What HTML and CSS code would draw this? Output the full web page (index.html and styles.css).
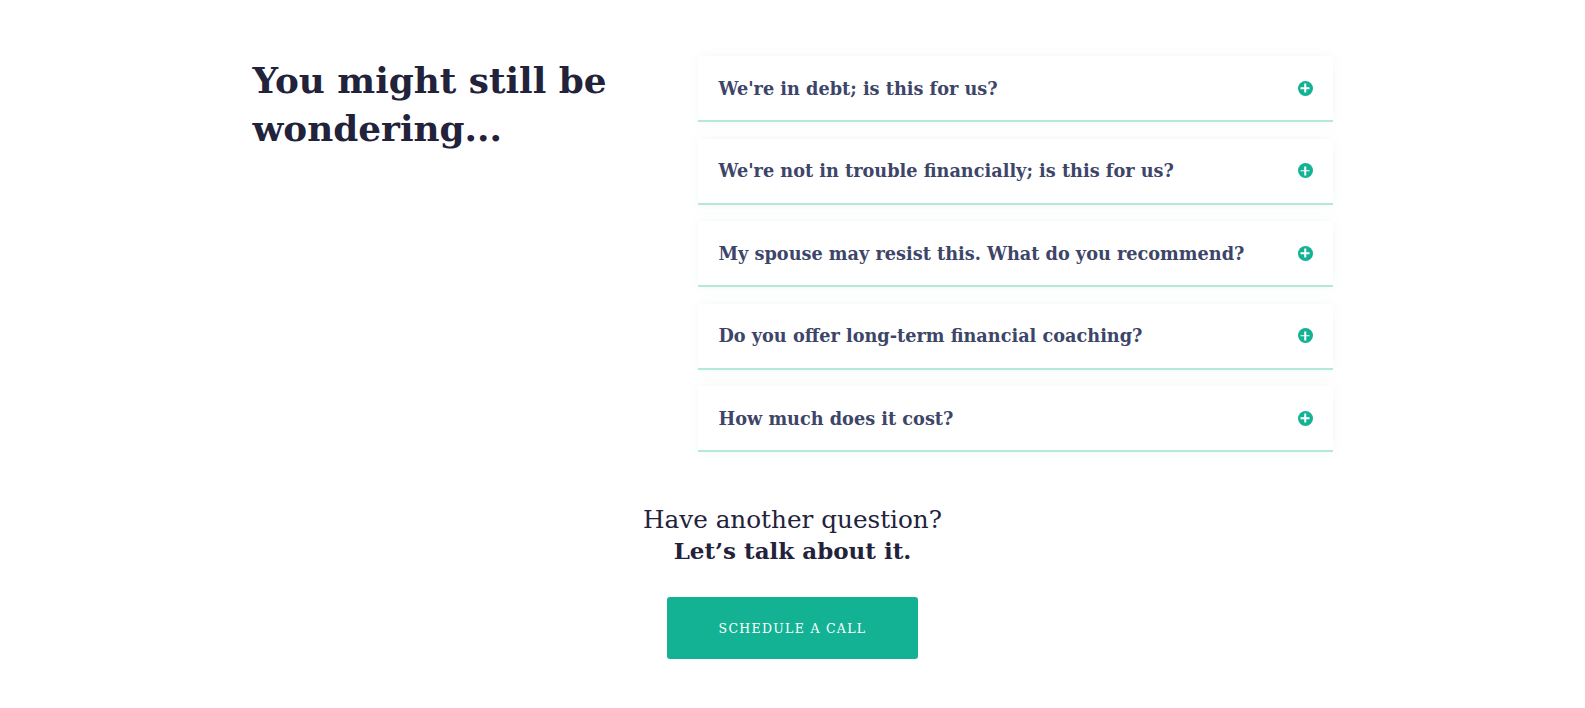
FILE: index.html
```html
<!DOCTYPE html>
<html lang="en">
<head>
<meta charset="utf-8">
<title>FAQ</title>
<link rel="stylesheet" href="styles.css">
</head>
<body>
<section class="faq-section">
  <div class="faq-grid">
    <h2 class="faq-title">You might still be wondering...</h2>
    <div class="faq-list">
      <div class="faq-item"><span class="faq-q">We're in debt; is this for us?</span><span class="faq-icon"></span></div>
      <div class="faq-item"><span class="faq-q">We're not in trouble financially; is this for us?</span><span class="faq-icon"></span></div>
      <div class="faq-item"><span class="faq-q">My spouse may resist this. What do you recommend?</span><span class="faq-icon"></span></div>
      <div class="faq-item"><span class="faq-q">Do you offer long-term financial coaching?</span><span class="faq-icon"></span></div>
      <div class="faq-item"><span class="faq-q">How much does it cost?</span><span class="faq-icon"></span></div>
    </div>
  </div>
  <div class="cta">
    <p class="cta-text"><span class="cta-light">Have another question?</span><strong class="cta-bold">Let’s talk about it.</strong></p>
    <a class="cta-button" href="#">SCHEDULE A CALL</a>
  </div>
</section>
</body>
</html>
```

FILE: styles.css
```css
html, body {
  margin: 0;
  padding: 0;
  background: #ffffff;
}
body {
  font-family: "DejaVu Serif", "Liberation Serif", serif;
  color: #22223b;
}
.faq-section {
  width: 1080px;
  margin: 0 auto;
  padding-top: 56px;
}
.faq-grid {
  display: grid;
  grid-template-columns: 445px 635px;
}
.faq-title {
  margin: 0;
  font-size: 35.8px;
  line-height: 48px;
  font-weight: 700;
  color: #22223b;
}
.faq-list {
  display: flex;
  flex-direction: column;
  gap: 16.5px;
}
.faq-item {
  height: 64px;
  display: flex;
  align-items: center;
  justify-content: space-between;
  padding: 0 20px 0 21px;
  background: #ffffff;
  border-bottom: 2px solid #b3e8dc;
  box-shadow: 0 0 12px rgba(20, 120, 100, 0.05);
}
.faq-q {
  font-size: 17.7px;
  font-weight: 700;
  color: #3d4568;
}
.faq-icon {
  position: relative;
  width: 15px;
  height: 15px;
  border-radius: 50%;
  background: #14b294;
}
.faq-icon::before,
.faq-icon::after {
  content: "";
  position: absolute;
  background: #ffffff;
  left: 50%;
  top: 50%;
  transform: translate(-50%, -50%);
}
.faq-icon::before {
  width: 9px;
  height: 1.5px;
}
.faq-icon::after {
  width: 1.5px;
  height: 9px;
}
.cta {
  display: flex;
  flex-direction: column;
  align-items: center;
  padding-top: 52px;
}
.cta-text {
  margin: 0;
  text-align: center;
  color: #22223b;
  display: flex;
  flex-direction: column;
  align-items: center;
}
.cta-light {
  font-size: 24.7px;
  line-height: 31px;
  font-weight: 400;
}
.cta-bold {
  font-size: 23px;
  line-height: 31px;
  font-weight: 700;
}
.cta-button {
  margin-top: 31px;
  width: 251px;
  height: 62px;
  display: flex;
  align-items: center;
  justify-content: center;
  background: #14b294;
  color: #ffffff;
  border-radius: 3px;
  text-decoration: none;
  font-size: 12.5px;
  letter-spacing: 1.3px;
}
```
